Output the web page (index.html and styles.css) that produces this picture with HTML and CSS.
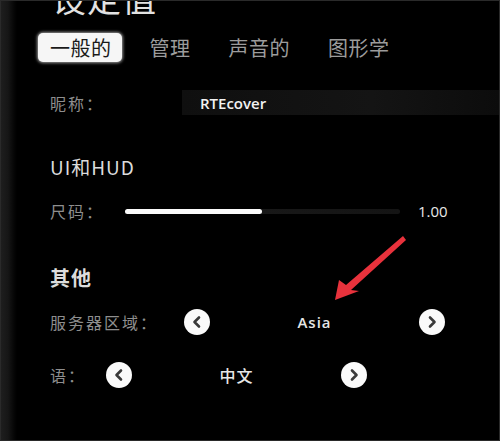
FILE: index.html
```html
<!DOCTYPE html>
<html lang="zh">
<head>
<meta charset="utf-8">
<title>设定值</title>
<link rel="stylesheet" href="styles.css">
</head>
<body>
<div class="screen">
  <h1 class="title">设定值</h1>
  <nav class="tabs">
    <span class="tab active">一般的</span>
    <span class="tab">管理</span>
    <span class="tab">声音的</span>
    <span class="tab">图形学</span>
  </nav>
  <div class="row nick-row">
    <span class="label nick-label">昵称：</span>
    <div class="input">RTEcover</div>
  </div>
  <h2 class="section ui-title">UI和HUD</h2>
  <div class="row slider-row">
    <span class="label size-label">尺码：</span>
    <div class="track"><div class="fill" style="width:137px"></div></div>
    <span class="value">1.00</span>
  </div>
  <h2 class="section other-title">其他</h2>
  <div class="row select-row server-row">
    <span class="label">服务器区域：</span>
    <div class="selector">
      <span class="arrow-btn"><svg viewBox="0 0 26 26" width="26" height="26"><path d="M15 8.5 L10.5 13 L15 17.5" fill="none" stroke="#3a3a3a" stroke-width="2.6" stroke-linecap="round" stroke-linejoin="round"/></svg></span>
      <span class="sel-value">Asia</span>
      <span class="arrow-btn"><svg viewBox="0 0 26 26" width="26" height="26"><path d="M11 8.5 L15.5 13 L11 17.5" fill="none" stroke="#3a3a3a" stroke-width="2.6" stroke-linecap="round" stroke-linejoin="round"/></svg></span>
    </div>
  </div>
  <div class="row select-row lang-row">
    <span class="label">语：</span>
    <div class="selector">
      <span class="arrow-btn"><svg viewBox="0 0 26 26" width="26" height="26"><path d="M15 8.5 L10.5 13 L15 17.5" fill="none" stroke="#3a3a3a" stroke-width="2.6" stroke-linecap="round" stroke-linejoin="round"/></svg></span>
      <span class="sel-value cjk-value">中文</span>
      <span class="arrow-btn"><svg viewBox="0 0 26 26" width="26" height="26"><path d="M11 8.5 L15.5 13 L11 17.5" fill="none" stroke="#3a3a3a" stroke-width="2.6" stroke-linecap="round" stroke-linejoin="round"/></svg></span>
    </div>
  </div>
  <svg class="annotation" viewBox="0 0 500 441" width="500" height="441">
    <polygon points="335,300 339,280 346,285 403,236 406,240 351,290 359,291" fill="#e8323c"/>
  </svg>
</div>
</body>
</html>
```
FILE: styles.css
```css
html, body {
  margin: 0;
  padding: 0;
  background: #000;
}

.screen {
  position: relative;
  width: 500px;
  height: 441px;
  box-sizing: border-box;
  overflow: hidden;
  border: 1px solid #2a2a2a;
  background: linear-gradient(to right, #1e1e1e 0, #161616 7px, #060606 13px, #000 16px);
  font-family: "Noto Sans CJK SC", "Noto Sans", sans-serif;
  color: #e0e0e0;
}

.title {
  margin: -20px 0 0 51px;
  font-size: 34px;
  line-height: 34px;
  font-weight: 400;
  letter-spacing: 1px;
  color: #e2e2e2;
}

.tabs {
  display: flex;
  gap: 16px;
  margin: 18px 0 0 37px;
}

.tab {
  padding: 4px 10px 4px 12px;
  font-size: 20px;
  line-height: 21px;
  letter-spacing: 0.5px;
  color: #9c9c9c;
}

.tab.active {
  background: #f6f6f6;
  color: #1a1a1a;
  border-radius: 5px;
  box-shadow: 0 0 3px 1px rgba(255, 255, 255, 0.6);
}

.row {
  display: flex;
  align-items: center;
  padding-left: 49px;
}

.label {
  font-size: 16px;
  letter-spacing: 2px;
  color: #8e8e8e;
  white-space: nowrap;
}

.nick-row {
  margin-top: 28px;
  height: 25px;
}

.nick-label {
  width: 132px;
  flex: none;
}

.input {
  flex: 1;
  height: 25px;
  display: flex;
  align-items: center;
  padding-left: 18px;
  background: linear-gradient(to right, #0f0f0f, #141414 60%, #0c0c0c);
  font-family: "Open Sans", "Noto Sans", sans-serif;
  font-size: 15px;
  font-weight: 600;
  color: #f2f2f2;
}

.section {
  margin: 0;
  padding-left: 49px;
  font-weight: 400;
  color: #dcdcdc;
}

.ui-title {
  margin-top: 40px;
  font-size: 19px;
  line-height: 24px;
  letter-spacing: 1px;
}

.slider-row {
  margin-top: 22px;
  height: 20px;
}

.size-label {
  width: 75px;
}

.track {
  width: 275px;
  height: 5px;
  border-radius: 3px;
  background: linear-gradient(to right, #1c1c1c, #141414);
}

.fill {
  height: 5px;
  border-radius: 3px;
  background: #fafafa;
}

.value {
  margin-left: 18px;
  font-family: "Open Sans", "Noto Sans", sans-serif;
  font-size: 15px;
  color: #e8e8e8;
}

.other-title {
  margin-top: 45px;
  font-size: 20px;
  line-height: 24px;
  font-weight: 700;
  letter-spacing: 1px;
}

.select-row {
  height: 26px;
}

.server-row {
  margin-top: 19px;
  gap: 26px;
}

.lang-row {
  margin-top: 27px;
  gap: 20px;
}

.selector {
  width: 261px;
  display: flex;
  align-items: center;
}

.arrow-btn {
  width: 26px;
  height: 26px;
  border-radius: 50%;
  background: #fafafa;
  display: flex;
}

.sel-value {
  flex: 1;
  text-align: center;
  font-family: "Open Sans", "Noto Sans", sans-serif;
  font-size: 15px;
  font-weight: 600;
  letter-spacing: 1px;
  color: #e6e6e6;
}

.cjk-value {
  font-family: "Noto Sans CJK SC", sans-serif;
  font-size: 16px;
  font-weight: 500;
  letter-spacing: 1px;
}

.annotation {
  position: absolute;
  left: -1px;
  top: -1px;
  pointer-events: none;
}
```
